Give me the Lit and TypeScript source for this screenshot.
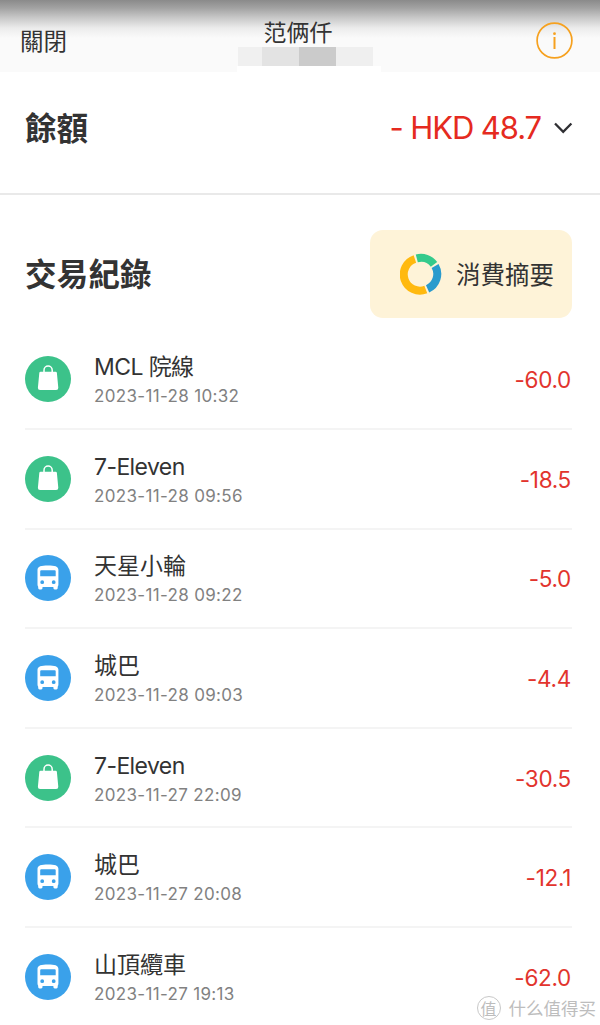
import { LitElement, html, css, svg } from "lit";
import { customElement } from "lit/decorators.js";
import { classMap } from "lit/directives/class-map.js";

type Kind = "shop" | "bus";
interface Entry {
  kind: Kind;
  name: string;
  time: string;
  amount: string;
}

const ENTRIES: Entry[] = [
  { kind: "shop", name: "MCL 院線", time: "2023-11-28 10:32", amount: "-60.0" },
  { kind: "shop", name: "7-Eleven", time: "2023-11-28 09:56", amount: "-18.5" },
  { kind: "bus", name: "天星小輪", time: "2023-11-28 09:22", amount: "-5.0" },
  { kind: "bus", name: "城巴", time: "2023-11-28 09:03", amount: "-4.4" },
  { kind: "shop", name: "7-Eleven", time: "2023-11-27 22:09", amount: "-30.5" },
  { kind: "bus", name: "城巴", time: "2023-11-27 20:08", amount: "-12.1" },
  { kind: "bus", name: "山頂纜車", time: "2023-11-27 19:13", amount: "-62.0" },
];

const bagIcon = svg`
  <path d="M19 17v-2.800a4.100 4.100 0 0 1 8.200 0V17" fill="none" stroke="#fff" stroke-width="1.500"/>
  <path d="M15.600 15.800h15q1.200 0 1.300 1.200l1.400 14.700q.1 2.300-2.200 2.300h-16q-2.300 0-2.200-2.300l1.400-14.700q.1-1.200 1.300-1.200z" fill="#fff"/>`;

const busIcon = svg`
  <path fill="#fff" fill-rule="evenodd" d="M12.500 14.800C12.500 11.100 16.300 10.400 23 10.400s10.400.7 10.400 4.400V29.500q0 1.500-.7 2.200V33.100q0 1.300-1.300 1.300h-1.700q-1.300 0-1.300-1.300V32H17.500v1.100q0 1.300-1.300 1.300h-1.700q-1.300 0-1.300-1.300V31.700q-.7-.7-.7-2.200zM15.200 16.200v5.100h15.500v-5.100q0-1-1-1h-13.500q-1 0-1 1zM17.200 25.300a1.900 1.900 0 1 0 0 3.800a1.900 1.900 0 1 0 0-3.800zM28.700 25.300a1.900 1.900 0 1 0 0 3.800a1.900 1.900 0 1 0 0-3.800z"/>`;

@customElement("entry-row")
export class EntryRow extends LitElement {
  static properties = { entry: { attribute: false } };
  declare entry: Entry;

  static styles = css`
    :host {
      display: flex;
      box-sizing: border-box;
      height: 99.6px;
      align-items: center;
      border-bottom: 2px solid #f4f4f4;
    }
    .badge {
      width: 46px;
      height: 46px;
      border-radius: 50%;
      flex: none;
    }
    .badge svg {
      display: block;
    }
    .shop {
      background: #3cc28a;
    }
    .bus {
      background: #3aa1ea;
    }
    .info {
      flex: 1;
      margin-left: 23px;
      padding-top: 2px;
    }
    .name {
      font-size: 23px;
      line-height: 30px;
      color: #333;
    }
    .latin {
      letter-spacing: -0.6px;
    }
    .time {
      font-size: 17px;
      line-height: 24px;
      margin-top: 2px;
      letter-spacing: 0.33px;
      color: #818181;
    }
    .amount {
      font-size: 22.5px;
      line-height: 30px;
      padding: 2px 1px 0 0;
      letter-spacing: -0.3px;
      color: #e2342d;
    }
  `;

  render() {
    const { kind, name, time, amount } = this.entry;
    return html`
      <div class=${classMap({ badge: true, shop: kind === "shop", bus: kind === "bus" })}>
        <svg width="46" height="46" viewBox="0 0 46 46">${kind === "shop" ? bagIcon : busIcon}</svg>
      </div>
      <div class="info">
        <div class=${classMap({ name: true, latin: /[A-Za-z]/.test(name) })}>${name}</div>
        <div class="time">${time}</div>
      </div>
      <div class="amount">${amount}</div>
    `;
  }
}

@customElement("app-root")
export class AppRoot extends LitElement {
  static styles = css`
    :host {
      display: block;
      position: relative;
      box-sizing: border-box;
      height: 1025px;
      overflow: hidden;
      background: #fff;
      color: #333;
      font-family: Inter, "Noto Sans CJK TC", sans-serif;
    }
    .header {
      display: grid;
      grid-template-columns: 237px 144px 1fr;
      height: 72px;
      background: linear-gradient(#8a8a8a 0, #a2a2a2 8px, #c9c9c9 18px, #ececec 28px, #fafafa 38px);
    }
    .close {
      padding: 25px 0 0 20px;
      font-size: 23.5px;
      line-height: 34px;
    }
    .who {
      display: flex;
      flex-direction: column;
      align-items: center;
    }
    .owner {
      box-sizing: border-box;
      height: 47px;
      padding: 16px 22px 0 0;
      font-size: 23px;
      line-height: 34px;
      white-space: nowrap;
    }
    .mask {
      display: flex;
      width: 100%;
      height: 25px;
      box-sizing: border-box;
      padding: 0 8px 6px 1px;
      background: linear-gradient(#fafafa 19px, #fff 19px);
    }
    .m1 { width: 24px; background: #f0f0f0; }
    .m2 { width: 37px; background: #e3e3e3; }
    .m3 { width: 37px; background: #cbcbcb; }
    .m4 { width: 37px; background: #efefef; }
    .about {
      display: flex;
      justify-content: flex-end;
      padding: 22px 27px 0 0;
    }
    .balance {
      display: flex;
      box-sizing: border-box;
      height: 123px;
      padding: 0 27px 9px 25px;
      align-items: center;
      border-bottom: 2px solid #e9e9e9;
    }
    .title {
      flex: 1;
      padding-top: 1px;
      font-size: 31.500px;
      line-height: 44px;
      font-weight: 700;
    }
    .total {
      font-size: 31px;
      line-height: 44px;
      letter-spacing: -1.100px;
      color: #e52a20;
      margin-right: 12px;
    }
    .records {
      display: flex;
      height: 88px;
      padding: 35px 28px 0 25px;
      align-items: center;
    }
    .records .title {
      padding-top: 2px;
      letter-spacing: 0.2px;
    }
    .summary {
      display: flex;
      box-sizing: border-box;
      width: 202px;
      height: 88px;
      padding-left: 30px;
      align-items: center;
      gap: 14px;
      border-radius: 13px;
      background: #fef3d8;
      font-size: 24.500px;
      line-height: 36px;
      white-space: nowrap;
    }
    .summary span {
      padding-top: 2px;
    }
    .list {
      padding: 12.400px 28px 0 25px;
    }
    .mark {
      position: absolute;
      right: 4px;
      bottom: 5px;
      display: flex;
      align-items: center;
      gap: 8px;
      color: #bdbdbd;
      font-size: 17.500px;
      line-height: 24px;
      font-family: "Noto Sans CJK SC", sans-serif;
    }
    .stamp {
      width: 22px;
      height: 22px;
      border: 1px solid #c8c8c8;
      border-radius: 50%;
      font-size: 16px;
      line-height: 22px;
      text-align: center;
    }
  `;

  render() {
    return html`
      <div class="header">
        <div class="close">關閉</div>
        <div class="who">
          <div class="owner">范俩仟</div>
          <div class="mask">
            <div class="m1"></div><div class="m2"></div><div class="m3"></div><div class="m4"></div>
          </div>
        </div>
        <div class="about">
          <svg width="37" height="37" viewBox="0 0 37 37">
            <circle cx="18.500" cy="18.500" r="17.400" fill="none" stroke="#f6a11f" stroke-width="1.700" />
            <circle cx="18.500" cy="11.700" r="1.400" fill="#f6a11f" />
            <path d="M18.500 15v12" stroke="#f6a11f" stroke-width="2" />
          </svg>
        </div>
      </div>
      <div class="balance">
        <div class="title">餘額</div>
        <div class="total">- HKD 48.7</div>
        <svg width="20" height="14" viewBox="0 0 20 14">
          <path d="M2 2.500l8.200 8.300 8.200-8.300" fill="none" stroke="#2f2f33" stroke-width="2.300" />
        </svg>
      </div>
      <div class="records">
        <div class="title">交易紀錄</div>
        <div class="summary">
          <svg width="42" height="42" viewBox="-21 -21 42 42">
            <g fill="none" stroke-width="8">
              <path d="M-4.200-15.700A16.200 16.200 0 0 1 13-9.700" stroke="#35ca8c" />
              <path d="M14.100-8.100A16.200 16.200 0 0 1 6.600 14.800" stroke="#2a9bcd" />
              <path d="M4.800 15.500A16.200 16.200 0 1 1-6.100-15" stroke="#ffb90f" />
            </g>
          </svg>
          <span>消費摘要</span>
        </div>
      </div>
      <div class="list">${ENTRIES.map((e) => html`<entry-row .entry=${e}></entry-row>`)}</div>
      <div class="mark"><span class="stamp">值</span><span>什么值得买</span></div>
    `;
  }
}
